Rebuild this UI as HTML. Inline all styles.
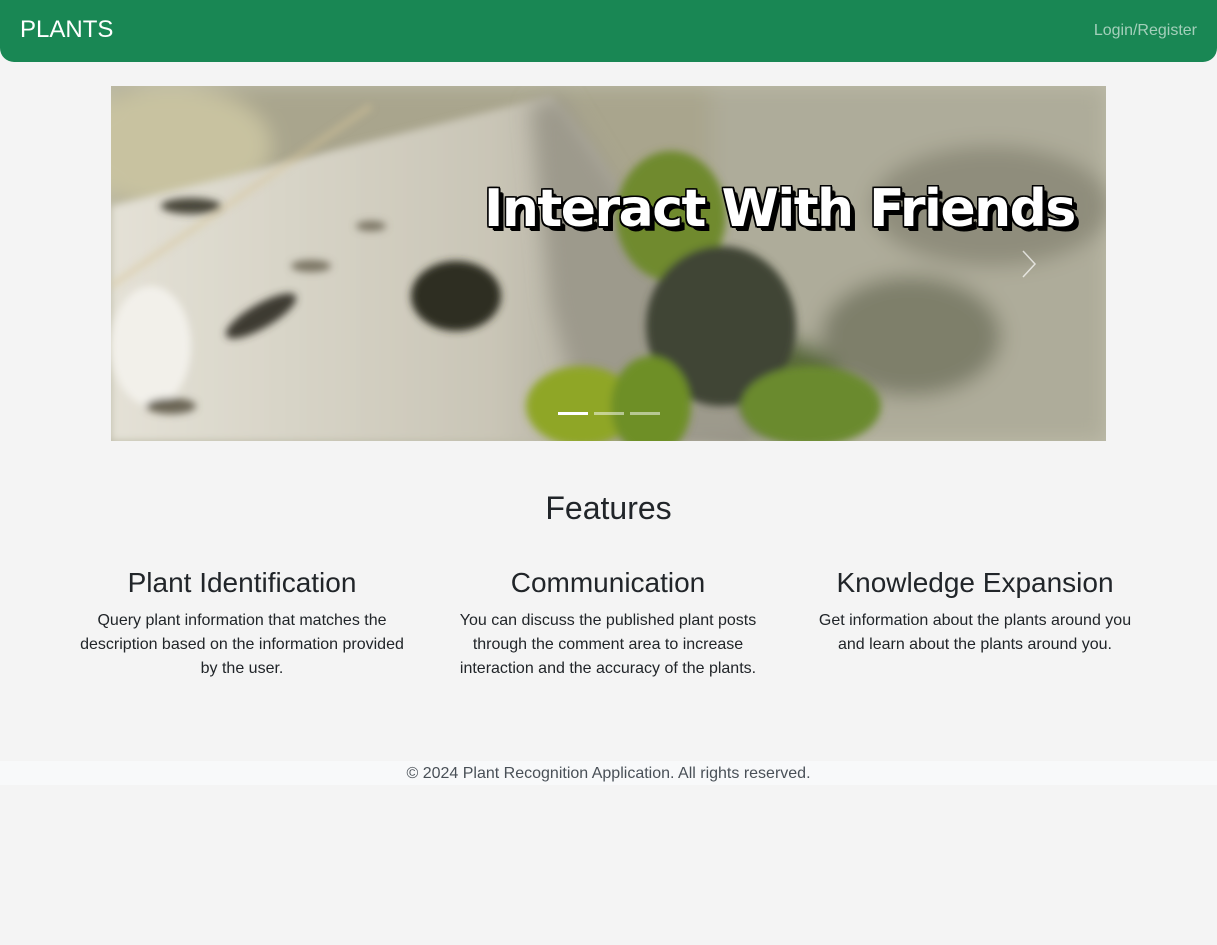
<!DOCTYPE html>
<html><head><meta charset="utf-8">
<style>
*{box-sizing:border-box;margin:0;padding:0}
body{width:1217px;height:945px;background:#f4f4f4;font-family:"Liberation Sans",Arial,sans-serif;color:#212529;position:relative;overflow:hidden}
.nav{position:absolute;left:0;top:0;width:1217px;height:62px;background:#198754;border-radius:0 0 14px 14px}
.brand{position:absolute;left:20px;top:16px;font-size:24px;color:#fff}
.login{position:absolute;right:20px;top:22px;font-size:16px;color:rgba(255,255,255,.6)}
.car{position:absolute;left:111px;top:86px;width:995px;height:355px;overflow:hidden;background:#b9b8a6}
.cap{position:absolute;left:373px;top:93px;font-family:"DejaVu Sans",sans-serif;font-weight:bold;font-size:52px;color:#fff;letter-spacing:-1.5px;white-space:nowrap;
text-shadow:4px 4px 0 #000,5px 5px 0 #000,-1.5px -1.5px 0 #000,1.5px -1.5px 0 #000,-1.5px 1.5px 0 #000,1.5px 1.5px 0 #000,0 2px 0 #000,2px 0 0 #000,0 -1.5px 0 #000,-1.5px 0 0 #000}
.ind{position:absolute;top:326px;height:3px;width:30px;background:#fff}
h2{position:absolute;left:0;width:1217px;top:490px;text-align:center;font-weight:400;font-size:32px}
.col{position:absolute;top:567px;text-align:center}
.col h3{font-weight:400;font-size:28px;margin-bottom:10px}
.col p{font-size:16px;line-height:24px}
.foot{position:absolute;left:0;top:761px;width:1217px;height:24px;background:#f8f9fa;text-align:center;font-size:16px;line-height:24px;color:#495057;padding-top:1px}
</style></head><body>
<div class="nav"><div class="brand">PLANTS</div><div class="login">Login/Register</div></div>
<div class="car">
<svg width="995" height="355" viewBox="0 0 995 355">
<defs><filter id="b"><feGaussianBlur stdDeviation="10"/></filter><filter id="s"><feGaussianBlur stdDeviation="4"/></filter>
<linearGradient id="g" x1="0" y1="0" x2="1" y2="0"><stop offset="0" stop-color="#e4e1d6"/><stop offset=".6" stop-color="#c9c5b6"/><stop offset="1" stop-color="#8f8c80"/></linearGradient></defs>
<rect width="995" height="355" fill="#bdbba8"/>
<g filter="url(#b)">
<rect x="0" y="0" width="995" height="120" fill="#a9a58d"/>
<rect x="600" y="0" width="395" height="355" fill="#aeac9a"/>
<ellipse cx="880" cy="120" rx="120" ry="60" fill="#8f8d7b"/>
<ellipse cx="800" cy="250" rx="90" ry="60" fill="#7e7f6a"/>
<ellipse cx="60" cy="60" rx="100" ry="60" fill="#c8c2a0"/>
<ellipse cx="660" cy="300" rx="70" ry="50" fill="#5a6a3a"/>
</g>
<polygon points="0,120 200,70 400,20 440,10 480,60 540,150 580,260 640,355 0,355" fill="url(#g)" filter="url(#s)"/>
<polygon points="420,20 450,10 500,90 560,180 610,280 650,355 480,355 440,220" fill="#9d9a8c" filter="url(#b)"/>
<g filter="url(#s)">
<ellipse cx="560" cy="130" rx="55" ry="65" fill="#6f8a2e"/>
<ellipse cx="610" cy="240" rx="75" ry="80" fill="#3f4535"/>
<ellipse cx="700" cy="320" rx="70" ry="40" fill="#6a8a2e"/>
<ellipse cx="470" cy="320" rx="55" ry="40" fill="#8fa626"/>
<ellipse cx="540" cy="320" rx="40" ry="50" fill="#6e8f25"/>
<ellipse cx="345" cy="210" rx="45" ry="35" fill="#2f2e22"/>
<ellipse cx="150" cy="230" rx="40" ry="12" fill="#3d3a30" transform="rotate(-30 150 230)"/>
<ellipse cx="80" cy="120" rx="30" ry="8" fill="#4a463a"/>
<ellipse cx="40" cy="260" rx="40" ry="60" fill="#f2f0ea"/>
<ellipse cx="200" cy="180" rx="20" ry="6" fill="#7a7564"/>
<ellipse cx="260" cy="140" rx="15" ry="5" fill="#7a7564"/>
<ellipse cx="60" cy="320" rx="25" ry="8" fill="#6a6555"/>
</g>
<path d="M0 200 L260 20" stroke="#d9c79a" stroke-width="6" opacity=".5" filter="url(#s)"/>
</svg>
<div class="cap">Interact With Friends</div>
<svg style="position:absolute;left:910px;top:163px" width="16" height="30"><path d="M2 2 L14 15 L2 28" stroke="#fff" stroke-width="1.5" fill="none" opacity=".7"/></svg>
<div class="ind" style="left:447px"></div>
<div class="ind" style="left:483px;opacity:.5"></div>
<div class="ind" style="left:519px;opacity:.5"></div>
</div>
<h2>Features</h2>
<div class="col" style="left:72px;width:340px"><h3>Plant Identification</h3><p>Query plant information that matches the description based on the information provided by the user.</p></div>
<div class="col" style="left:443px;width:330px"><h3>Communication</h3><p>You can discuss the published plant posts through the comment area to increase interaction and the accuracy of the plants.</p></div>
<div class="col" style="left:805px;width:340px"><h3>Knowledge Expansion</h3><p>Get information about the plants around you and learn about the plants around you.</p></div>
<div class="foot">© 2024 Plant Recognition Application. All rights reserved.</div>
</body></html>
